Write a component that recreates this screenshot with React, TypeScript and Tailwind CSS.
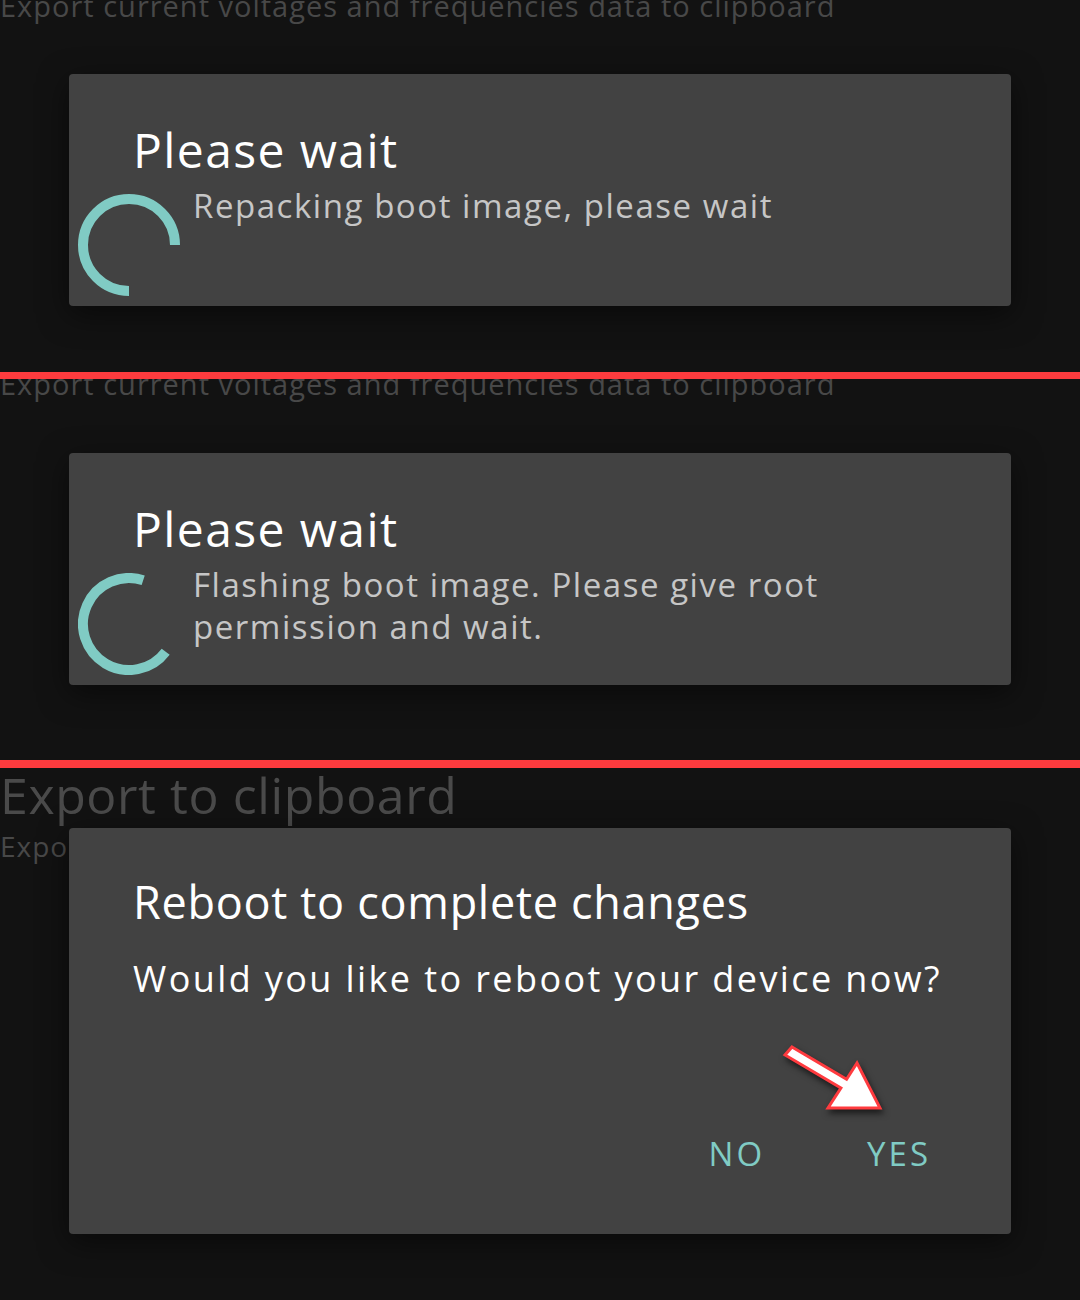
import React from "react";

const FONT = { fontFamily: '"Open Sans", "Noto Sans", sans-serif' };

function Spinner({ d }: { d: string }) {
  return (
    <svg width="102" height="102" viewBox="0 0 102 102" className="shrink-0">
      <path d={d} fill="none" stroke="#80cbc4" strokeWidth="10" strokeLinecap="butt" />
    </svg>
  );
}

function WaitDialog({ lines, arc }: { lines: string[]; arc: string }) {
  return (
    <div className="absolute left-[69px] top-[74px] w-[942px] h-[232px] rounded-[4px] bg-[#424242] shadow-[0_8px_30px_rgba(0,0,0,0.5)]">
      <div className="pt-[48px] pl-[64px] text-[48px] leading-[56px] tracking-[1.4px] text-white">Please wait</div>
      <div className="flex items-start mt-[7px] pl-[9px]">
        <div className="mt-[9px]">
          <Spinner d={arc} />
        </div>
        <div className="ml-[13px] text-[33px] leading-[42px] tracking-[1.55px] text-[#c6c6c6]">
          {lines.map((l) => (
            <div key={l}>{l}</div>
          ))}
        </div>
      </div>
    </div>
  );
}

function Arrow() {
  return (
    <svg
      width="130"
      height="90"
      viewBox="0 0 130 90"
      className="absolute left-[701px] top-[207px] drop-shadow-[2px_4px_3px_rgba(0,0,0,0.6)]"
    >
      <polygon
        points="22,12 76.6,44.2 87,28 110,73 58,73 70.9,53 15,20"
        fill="#ffffff"
        stroke="#ff3b3f"
        strokeWidth="3"
        strokeLinejoin="miter"
      />
    </svg>
  );
}

export default function App() {
  const bgText = "Export current voltages and frequencies data to clipboard";
  return (
    <div className="w-[1080px] h-[1300px] bg-[#121212] flex flex-col" style={FONT}>
      {/* Panel 1 */}
      <div className="relative h-[372px] overflow-hidden">
        <div className="mt-[-9px] text-[29px] leading-[29px] tracking-[1px] text-[#484848] whitespace-nowrap">{bgText}</div>
        <WaitDialog lines={["Repacking boot image, please wait"]} arc="M51 97 A46 46 0 1 1 97 51" />
      </div>
      <div className="h-[7px] bg-[#fd3b3e]" />
      {/* Panel 2 */}
      <div className="relative h-[381px] overflow-hidden">
        <div className="mt-[-10px] text-[29px] leading-[29px] tracking-[1px] text-[#484848] whitespace-nowrap">{bgText}</div>
        <WaitDialog
          lines={["Flashing boot image. Please give root", "permission and wait."]}
          arc="M87.7 78.7 A46 46 0 1 1 65.2 7.3"
        />
      </div>
      <div className="h-[8px] bg-[#fd3b3e]" />
      {/* Panel 3 */}
      <div className="relative flex-1 overflow-hidden">
        <div className="mt-[2px] text-[50px] leading-[50px] tracking-[0.6px] text-[#4a4a4a] whitespace-nowrap">Export to clipboard</div>
        <div className="mt-[12px] text-[28px] leading-[28px] tracking-[1px] text-[#484848] whitespace-nowrap">
          Export current voltages and frequencies data to clipboard
        </div>
        <div className="absolute left-[69px] top-[60px] w-[942px] h-[406px] rounded-[4px] bg-[#424242] shadow-[0_8px_30px_rgba(0,0,0,0.5)]">
          <div className="pt-[47px] pl-[64px] text-[45px] leading-[54px] tracking-[0.7px] text-white">Reboot to complete changes</div>
          <div className="mt-[28px] pl-[64px] text-[36px] leading-[44px] tracking-[2.4px] text-white">
            Would you like to reboot your device now?
          </div>
          <div className="absolute left-0 right-0 top-[306px] flex justify-end pr-[80px] gap-[102px] text-[33px] leading-[40px] tracking-[3px] text-[#80cbc4]">
            <span>NO</span>
            <span>YES</span>
          </div>
          <Arrow />
        </div>
      </div>
    </div>
  );
}
